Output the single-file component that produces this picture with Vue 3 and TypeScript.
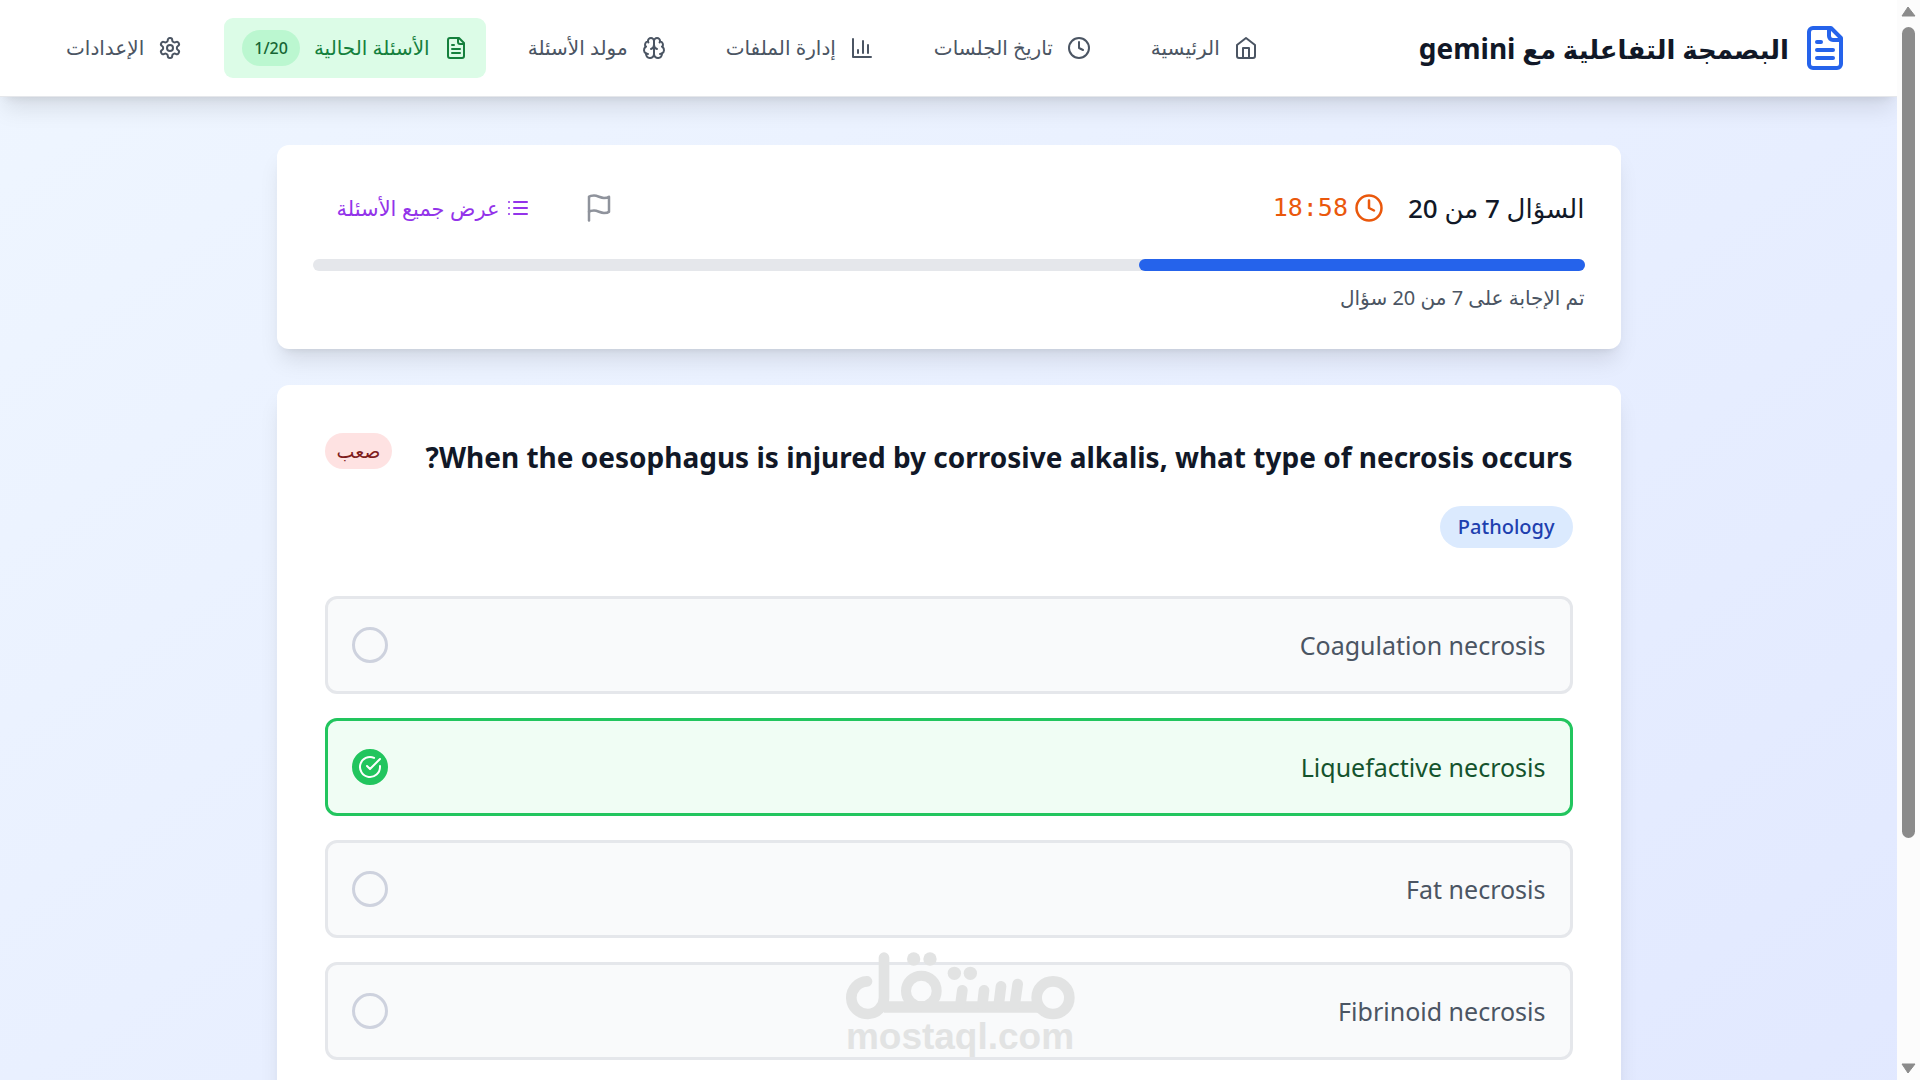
<script setup lang="ts">
import { computed, ref } from 'vue'

type IconName =
  | 'file'
  | 'home'
  | 'clock'
  | 'chart'
  | 'brain'
  | 'settings'
  | 'flag'
  | 'list'
  | 'check'

interface NavItem {
  label: string
  icon: IconName
  badge?: string
  active?: boolean
}

const icons: Record<IconName, string[]> = {
  file: [
    'M15 2H6a2 2 0 0 0-2 2v16a2 2 0 0 0 2 2h12a2 2 0 0 0 2-2V7Z',
    'M14 2v4a2 2 0 0 0 2 2h4',
    'M10 9H8',
    'M16 13H8',
    'M16 17H8',
  ],
  home: ['m3 9 9-7 9 7v11a2 2 0 0 1-2 2H5a2 2 0 0 1-2-2z', 'M9 22V12h6v10'],
  clock: ['M12 2a10 10 0 1 0 0 20 10 10 0 1 0 0-20z', 'M12 6v6l4 2'],
  chart: ['M3 3v18h18', 'M18 17V9', 'M13 17V5', 'M8 17v-3'],
  brain: [
    'M12 5a3 3 0 1 0-5.997.125 4 4 0 0 0-2.526 5.77 4 4 0 0 0 .556 6.588A4 4 0 1 0 12 18Z',
    'M12 5a3 3 0 1 1 5.997.125 4 4 0 0 1 2.526 5.77 4 4 0 0 1-.556 6.588A4 4 0 1 1 12 18Z',
    'M15 13a4.5 4.5 0 0 1-3-4 4.5 4.5 0 0 1-3 4',
    'M17.599 6.5a3 3 0 0 0 .399-1.375',
    'M6.003 5.125A3 3 0 0 0 6.401 6.5',
    'M3.477 10.896a4 4 0 0 1 .585-.396',
    'M19.938 10.5a4 4 0 0 1 .585.396',
    'M6 18a4 4 0 0 1-1.967-.516',
    'M19.967 17.484A4 4 0 0 1 18 18',
  ],
  settings: [
    'M12.22 2h-.44a2 2 0 0 0-2 2v.18a2 2 0 0 1-1 1.73l-.43.25a2 2 0 0 1-2 0l-.15-.08a2 2 0 0 0-2.73.73l-.22.38a2 2 0 0 0 .73 2.73l.15.1a2 2 0 0 1 1 1.72v.51a2 2 0 0 1-1 1.74l-.15.09a2 2 0 0 0-.73 2.73l.22.38a2 2 0 0 0 2.73.73l.15-.08a2 2 0 0 1 2 0l.43.25a2 2 0 0 1 1 1.73V20a2 2 0 0 0 2 2h.44a2 2 0 0 0 2-2v-.18a2 2 0 0 1 1-1.73l.43-.25a2 2 0 0 1 2 0l.15.08a2 2 0 0 0 2.73-.73l.22-.39a2 2 0 0 0-.73-2.73l-.15-.08a2 2 0 0 1-1-1.74v-.5a2 2 0 0 1 1-1.74l.15-.09a2 2 0 0 0 .73-2.73l-.22-.38a2 2 0 0 0-2.73-.73l-.15.08a2 2 0 0 1-2 0l-.43-.25a2 2 0 0 1-1-1.73V4a2 2 0 0 0-2-2z',
    'M12 9a3 3 0 1 0 0 6 3 3 0 1 0 0-6z',
  ],
  flag: ['M4 15s1-1 4-1 5 2 8 2 4-1 4-1V3s-1 1-4 1-5-2-8-2-4 1-4 1z', 'M4 22v-7'],
  list: ['M8 6h13', 'M8 12h13', 'M8 18h13', 'M3 6h.01', 'M3 12h.01', 'M3 18h.01'],
  check: ['M22 11.08V12a10 10 0 1 1-5.93-9.14', 'M22 4 12 14.01l-3-3'],
}

const nav: NavItem[] = [
  { label: 'الرئيسية', icon: 'home' },
  { label: 'تاريخ الجلسات', icon: 'clock' },
  { label: 'إدارة الملفات', icon: 'chart' },
  { label: 'مولد الأسئلة', icon: 'brain' },
  { label: 'الأسئلة الحالية', icon: 'file', badge: '1/20', active: true },
  { label: 'الإعدادات', icon: 'settings' },
]

const options = ['Coagulation necrosis', 'Liquefactive necrosis', 'Fat necrosis', 'Fibrinoid necrosis']
const selected = ref('Liquefactive necrosis')

const answered = 7
const total = 20
const progress = computed(() => `${(answered / total) * 100}%`)
</script>

<template>
  <div class="window">
    <div class="page" dir="rtl" lang="ar">
      <header class="topbar">
        <div class="brand">
          <svg class="icon icon-xl" viewBox="0 0 24 24" aria-hidden="true">
            <path v-for="d in icons.file" :key="d" :d="d" />
          </svg>
          <h1>البصمجة التفاعلية مع <span class="product">gemini</span></h1>
        </div>
        <nav class="nav">
          <a v-for="item in nav" :key="item.label" href="#" class="nav-item" :class="{ active: item.active }">
            <svg class="icon icon-sm" viewBox="0 0 24 24" aria-hidden="true">
              <path v-for="d in icons[item.icon]" :key="d" :d="d" />
            </svg>
            <span>{{ item.label }}</span>
            <span v-if="item.badge" class="count">{{ item.badge }}</span>
          </a>
        </nav>
      </header>

      <main class="content">
        <section class="card status">
          <div class="status-row">
            <div class="status-info">
              <h2>السؤال {{ answered }} من {{ total }}</h2>
              <div class="timer">
                <svg class="icon icon-md" viewBox="0 0 24 24" aria-hidden="true">
                  <path v-for="d in icons.clock" :key="d" :d="d" />
                </svg>
                <span class="time">18:58</span>
              </div>
            </div>
            <div class="status-actions">
              <button type="button" class="flag" aria-label="تمييز السؤال">
                <svg class="icon icon-md" viewBox="0 0 24 24" aria-hidden="true">
                  <path v-for="d in icons.flag" :key="d" :d="d" />
                </svg>
              </button>
              <button type="button" class="show-all">
                <svg class="icon icon-sm" viewBox="0 0 24 24" aria-hidden="true">
                  <path v-for="d in icons.list" :key="d" :d="d" />
                </svg>
                <span>عرض جميع الأسئلة</span>
              </button>
            </div>
          </div>
          <div class="track" role="progressbar" :aria-valuenow="answered" aria-valuemin="0" :aria-valuemax="total">
            <div class="fill" :style="{ width: progress }"></div>
          </div>
          <p class="summary">تم الإجابة على {{ answered }} من {{ total }} سؤال</p>
        </section>

        <section class="card question">
          <div class="question-head">
            <h3 id="question-text">When the oesophagus is injured by corrosive alkalis, what type of necrosis occurs?</h3>
            <span class="difficulty">صعب</span>
          </div>
          <span class="topic">Pathology</span>
          <div class="options" role="radiogroup" aria-labelledby="question-text">
            <label v-for="option in options" :key="option" class="option" :class="{ chosen: option === selected }">
              <span>{{ option }}</span>
              <span class="mark">
                <input v-model="selected" type="radio" name="answer" :value="option" />
                <svg v-if="option === selected" class="icon icon-sm" viewBox="0 0 24 24" aria-hidden="true">
                  <path v-for="d in icons.check" :key="d" :d="d" />
                </svg>
              </span>
            </label>
          </div>
        </section>
      </main>
    </div>

    <div class="scrollbar" aria-hidden="true">
      <svg class="arrow" viewBox="0 0 15 11"><path d="M7 1 14 10H1z" /></svg>
      <div class="rail"><div class="thumb"></div></div>
      <svg class="arrow" viewBox="0 0 15 11"><path d="M1 1H14L7 10z" /></svg>
    </div>

    <div class="watermark">
      <svg viewBox="132 93 696 210" aria-hidden="true">
        <g fill="none" stroke="#e2e3e3" stroke-width="32" stroke-linecap="round">
          <path d="M201 184A49 49 0 1 0 252 232V113" />
          <path d="M252 261H715" stroke-width="34" stroke-linecap="butt" />
          <circle cx="364" cy="213" r="46" stroke-width="30" />
          <circle cx="759" cy="233" r="49" />
          <path d="M487 211 481 256M552 211 547 256M603 199 596 256M653 192 644 256" />
        </g>
        <g fill="#e2e3e3">
          <circle cx="341" cy="117" r="20" />
          <circle cx="390" cy="117" r="20" />
          <circle cx="463" cy="160" r="20" />
          <circle cx="511" cy="160" r="20" />
        </g>
      </svg>
      <span>mostaql.com</span>
    </div>
  </div>
</template>

<style>
body {
  margin: 0;
}
</style>

<style scoped>
*,
*::before,
*::after {
  box-sizing: border-box;
}

.window {
  position: relative;
  display: grid;
  grid-template-columns: minmax(0, 1fr) 23px;
  height: 100vh;
  overflow: hidden;
  font-family: 'Noto Sans', 'DejaVu Sans', sans-serif;
  color: #111827;
}

h1,
h2,
h3,
p {
  margin: 0;
}

button {
  border: 0;
  background: none;
  font: inherit;
  cursor: pointer;
}

.page {
  display: flex;
  flex-direction: column;
  min-height: 126vh;
  background: linear-gradient(to bottom right, #eff6ff, #e0e7ff);
}

.icon {
  flex: none;
  fill: none;
  stroke: currentColor;
  stroke-width: 2;
  stroke-linecap: round;
  stroke-linejoin: round;
}

.icon-sm {
  width: 24px;
  height: 24px;
}

.icon-md {
  width: 30px;
  height: 30px;
}

.icon-xl {
  width: 48px;
  height: 48px;
}

.topbar {
  display: flex;
  align-items: center;
  justify-content: space-between;
  height: 97px;
  padding: 0 48px;
  border-bottom: 1px solid #e5e7eb;
  background: #fff;
  box-shadow: 0 15px 22px -4px rgba(0, 0, 0, 0.1), 0 6px 9px -6px rgba(0, 0, 0, 0.1);
}

.brand {
  display: flex;
  align-items: center;
  gap: 12px;
}

.brand .icon {
  color: #2563eb;
}

.brand h1 {
  font-size: 26px;
  font-weight: 700;
  line-height: 42px;
  white-space: nowrap;
}

.brand .product {
  font-size: 28px;
}

.nav {
  display: flex;
  gap: 24px;
}

.nav-item {
  display: flex;
  align-items: center;
  gap: 14px;
  height: 60px;
  padding: 0 18px;
  border-radius: 9px;
  color: #4b5563;
  font-size: 20px;
  font-weight: 500;
  line-height: 30px;
  white-space: nowrap;
  text-decoration: none;
}

.nav-item.active {
  background: #dcfce7;
  color: #15803d;
}

.count {
  padding: 3px 12px;
  border-radius: 18px;
  background: #bbf7d0;
  color: #166534;
  font-size: 16px;
}

.content {
  display: flex;
  flex: 1;
  flex-direction: column;
  gap: 36px;
  width: 100%;
  max-width: 1344px;
  margin: 0 auto;
  padding: 48px 0;
}

.card {
  border-radius: 12px;
  background: #fff;
  box-shadow: 0 15px 22px -4px rgba(0, 0, 0, 0.1), 0 6px 9px -6px rgba(0, 0, 0, 0.1);
}

.status {
  padding: 36px;
}

.status-row,
.status-info,
.status-actions,
.timer,
.show-all {
  display: flex;
  align-items: center;
}

.status-row {
  justify-content: space-between;
  height: 54px;
  margin-bottom: 24px;
}

.status-info {
  gap: 24px;
}

.status-info h2 {
  font-size: 26px;
  font-weight: 500;
  line-height: 42px;
}

.timer {
  gap: 6px;
  color: #ea580c;
}

.time {
  font-family: 'DejaVu Sans Mono', monospace;
  font-size: 25px;
  line-height: 42px;
}

.status-actions {
  gap: 18px;
}

.flag {
  display: flex;
  padding: 12px;
  color: #8f939c;
}

.show-all {
  gap: 6px;
  padding: 12px 24px;
  color: #9333ea;
  font-size: 21px;
  font-weight: 500;
  line-height: 30px;
}

.track {
  height: 12px;
  border-radius: 6px;
  background: #e5e7eb;
}

.fill {
  height: 100%;
  border-radius: 6px;
  background: #2563eb;
}

.summary {
  margin-top: 12px;
  color: #4b5563;
  font-size: 20px;
  line-height: 30px;
}

.question {
  flex: 1;
  padding: 48px;
}

.question-head {
  display: flex;
  align-items: flex-start;
  justify-content: space-between;
  margin-bottom: 24px;
}

.question-head h3 {
  font-size: 28px;
  font-weight: 700;
  line-height: 49px;
}

.difficulty {
  padding: 3px 12px;
  border-radius: 18px;
  background: #fee2e2;
  color: #7f1d1d;
  font-size: 19px;
  line-height: 30px;
}

.topic {
  display: block;
  width: fit-content;
  padding: 6px 18px;
  border-radius: 21px;
  background: #dbeafe;
  color: #1e40af;
  font-size: 20px;
  font-weight: 500;
  line-height: 30px;
}

.options {
  display: flex;
  flex-direction: column;
  gap: 24px;
  margin-top: 48px;
}

.option {
  display: flex;
  align-items: center;
  justify-content: space-between;
  padding: 24px;
  border: 3px solid #e5e7eb;
  border-radius: 12px;
  background: #f9fafb;
  color: #4b5563;
  font-size: 25px;
  line-height: 44px;
  cursor: pointer;
}

.option.chosen {
  border-color: #22c55e;
  background: #f0fdf4;
  color: #14532d;
}

.mark {
  display: grid;
  place-items: center;
  color: #fff;
}

.mark > * {
  grid-area: 1 / 1;
}

.mark input {
  width: 36px;
  height: 36px;
  margin: 0;
  border: 3px solid #ced2de;
  border-radius: 50%;
  appearance: none;
}

.mark input:checked {
  border-color: #22c55e;
  background: #22c55e;
}

.scrollbar {
  display: flex;
  flex-direction: column;
  align-items: center;
  gap: 10px;
  height: 100vh;
  padding: 6px 0;
  background: #fcfcfc;
}

.arrow {
  flex: none;
  width: 15px;
  height: 11px;
  fill: #8b8b8b;
  stroke: #8b8b8b;
  stroke-linejoin: round;
}

.rail {
  flex: 1;
}

.thumb {
  width: 13px;
  height: 79%;
  border-radius: 7px;
  background: #8b8b8b;
}

.watermark {
  position: absolute;
  bottom: 27px;
  left: 50%;
  display: flex;
  flex-direction: column;
  align-items: center;
  width: 232px;
  margin-left: -116px;
  color: #e2e3e3;
  font-family: 'Liberation Sans', Arial, sans-serif;
  font-size: 37px;
  font-weight: 700;
  line-height: 32px;
  pointer-events: none;
}

.watermark svg {
  width: 232px;
  height: 70px;
}
</style>
